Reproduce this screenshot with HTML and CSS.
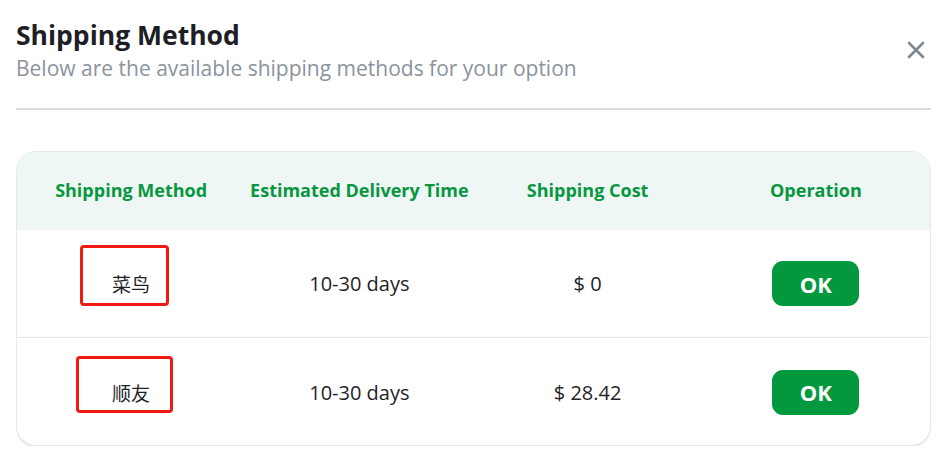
FILE: index.html
```html
<!DOCTYPE html>
<html lang="en">
<head>
<meta charset="utf-8">
<title>Shipping Method</title>
<link rel="stylesheet" href="styles.css">
</head>
<body>
<div class="dialog">
  <div class="dialog-header">
    <div class="titles">
      <h1 class="title">Shipping Method</h1>
      <p class="subtitle">Below are the available shipping methods for your option</p>
    </div>
    <button class="close" aria-label="Close">
      <svg width="18" height="18" viewBox="0 0 18 18"><path d="M2 2 L16 16 M16 2 L2 16" stroke="#7d8793" stroke-width="2.6" stroke-linecap="round" fill="none"/></svg>
    </button>
  </div>
  <div class="divider"></div>
  <div class="table">
    <div class="row head">
      <div class="cell">Shipping Method</div>
      <div class="cell">Estimated Delivery Time</div>
      <div class="cell">Shipping Cost</div>
      <div class="cell">Operation</div>
    </div>
    <div class="row">
      <div class="cell name"><span class="mark mark-1"></span>菜鸟</div>
      <div class="cell">10-30 days</div>
      <div class="cell">$ 0</div>
      <div class="cell"><button class="ok">OK</button></div>
    </div>
    <div class="row last">
      <div class="cell name"><span class="mark mark-2"></span>顺友</div>
      <div class="cell">10-30 days</div>
      <div class="cell">$ 28.42</div>
      <div class="cell"><button class="ok">OK</button></div>
    </div>
  </div>
</div>
</body>
</html>
```
FILE: styles.css
```css
* { box-sizing: border-box; }
html, body { margin: 0; padding: 0; background: #fff; }
body {
  font-family: "Open Sans", "Noto Sans", "Noto Sans CJK SC", sans-serif;
  color: #1f2329;
}
.dialog {
  padding: 17px 14px 0 16px;
}
.dialog-header {
  display: flex;
  justify-content: space-between;
  align-items: flex-start;
}
.title {
  margin: 0;
  font-size: 26.5px;
  line-height: 36px;
  font-weight: 700;
  color: #1c2026;
}
.subtitle {
  margin: 0;
  font-size: 21px;
  line-height: 30px;
  color: #8a939e;
}
.close {
  border: 0;
  background: none;
  padding: 0;
  margin: 24px 6px 0 0;
  width: 18px;
  height: 18px;
  cursor: pointer;
}
.close svg { display: block; }
.divider {
  height: 2px;
  background: #dcdcdc;
  margin-top: 25px;
}
.table {
  margin-top: 41px;
  border: 1px solid #e6e8eb;
  border-radius: 20px;
}
.row {
  display: grid;
  grid-template-columns: 1fr 1fr 1fr 1fr;
  height: 108px;
  border-bottom: 1px solid #e6e6e6;
  align-items: center;
}
.row.head {
  height: 78px;
  padding-bottom: 2px;
  background: #eef7f5;
  border-radius: 19px 19px 0 0;
  border-bottom: 0;
  color: #08963e;
  font-weight: 700;
}
.row.last {
  border-bottom: 0;
  box-shadow: 0 1px 0 #dcdcdc;
  margin: 0 -1px -1px;
  padding: 0 1px;
  border-radius: 0 0 20px 20px;
}
.cell {
  text-align: center;
  font-size: 20px;
  position: relative;
}
.row.head .cell { font-size: 18px; }
.name {
  font-family: "Noto Sans CJK SC", sans-serif;
  font-size: 19px;
}
.mark {
  position: absolute;
  border: 3px solid #f01a12;
  border-radius: 4px;
}
.mark-1 { left: 63px; top: -25px; width: 89px; height: 61px; }
.mark-2 { left: 59px; top: -23px; width: 97px; height: 57px; }
.ok {
  border: 0;
  background: #02983d;
  color: #fff;
  font-family: "Open Sans", sans-serif;
  font-weight: 700;
  font-size: 22px;
  width: 87px;
  height: 45px;
  border-radius: 11px;
  cursor: pointer;
}
```
